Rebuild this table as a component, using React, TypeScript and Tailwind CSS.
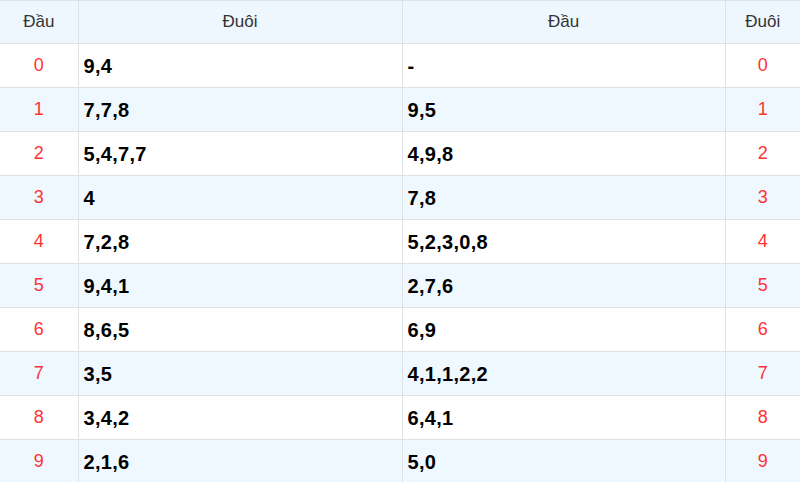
const rows: [number, string, string][] = [
  [0, '9,4', '-'],
  [1, '7,7,8', '9,5'],
  [2, '5,4,7,7', '4,9,8'],
  [3, '4', '7,8'],
  [4, '7,2,8', '5,2,3,0,8'],
  [5, '9,4,1', '2,7,6'],
  [6, '8,6,5', '6,9'],
  [7, '3,5', '4,1,1,2,2'],
  [8, '3,4,2', '6,4,1'],
  [9, '2,1,6', '5,0'],
]

export default function App() {
  return (
    <div className="w-[800px] h-[482px] overflow-hidden bg-white font-['Liberation_Sans',Arial,sans-serif]">
      <table className="w-[800px] border-collapse table-fixed">
        <colgroup>
          <col className="w-[78px]" />
          <col className="w-[324px]" />
          <col className="w-[323px]" />
          <col className="w-[75px]" />
        </colgroup>
        <thead>
          <tr className="h-[43px] bg-[#eef6fe] text-[17px] text-[#333]">
            <th className="font-normal border border-l-0 border-[#dee2e6]">Đầu</th>
            <th className="font-normal border border-[#dee2e6]">Đuôi</th>
            <th className="font-normal border border-[#dee2e6]">Đầu</th>
            <th className="font-normal border border-r-0 border-[#dee2e6]">Đuôi</th>
          </tr>
        </thead>
        <tbody>
          {rows.map(([n, a, b]) => (
            <tr key={n} className={`h-[44px] ${n % 2 === 1 ? 'bg-[#eff7ff]' : 'bg-white'}`}>
              <td className="border border-l-0 border-[#dee2e6] text-center text-[18px] text-[#f33]">{n}</td>
              <td className="border border-[#dee2e6] px-[5px] text-[20px] font-bold text-black tracking-[0.3px]">{a}</td>
              <td className="border border-[#dee2e6] px-[5px] text-[20px] font-bold text-black tracking-[0.3px]">{b}</td>
              <td className="border border-r-0 border-[#dee2e6] text-center text-[18px] text-[#f33]">{n}</td>
            </tr>
          ))}
        </tbody>
      </table>
    </div>
  )
}
